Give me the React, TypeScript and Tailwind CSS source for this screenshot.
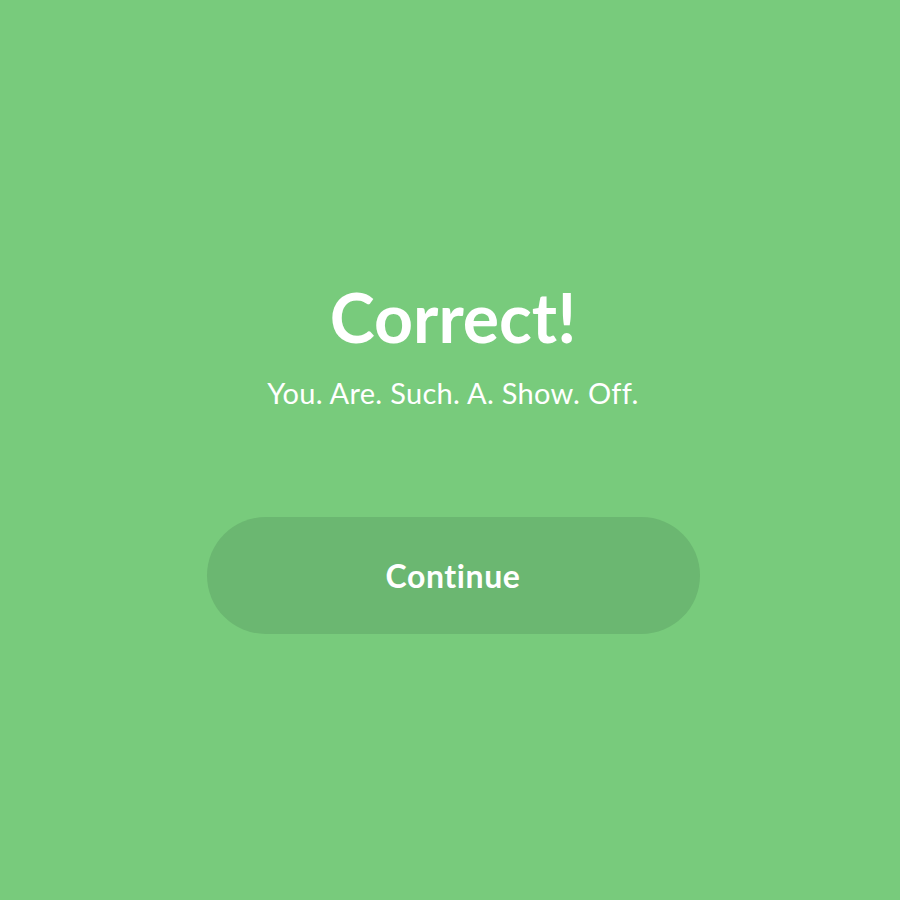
export default function App() {
  return (
    <div
      className="w-[900px] h-[900px] bg-[#78cb7c] flex flex-col items-center pl-[6px] text-white"
      style={{ fontFamily: 'Lato, "Noto Sans", sans-serif' }}
    >
      <h1 className="mt-[277px] text-[68px] font-bold leading-[80px] tracking-[0px]">
        Correct!
      </h1>
      <p className="mt-[18px] text-[29px] leading-[36px] tracking-[0.3px]">
        You. Are. Such. A. Show. Off.
      </p>
      <button className="mt-[106px] w-[493px] h-[117px] rounded-full bg-[#6bb771] text-[32px] font-bold tracking-[0.6px] text-white">
        Continue
      </button>
    </div>
  );
}
